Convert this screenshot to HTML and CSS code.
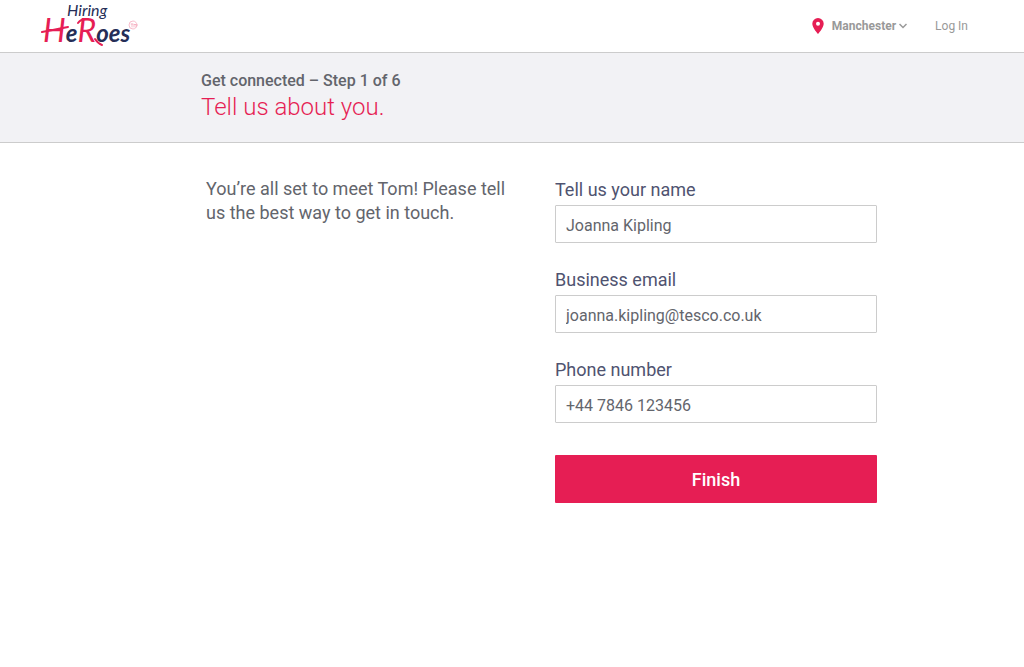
FILE: index.html
```html
<!DOCTYPE html>
<html lang="en">
<head>
<meta charset="utf-8">
<meta name="viewport" content="width=device-width, initial-scale=1">
<title>Hiring Heroes – Get connected</title>
<link rel="stylesheet" href="styles.css">
</head>
<body>
<header class="site-header">
  <a class="logo" href="#" aria-label="Hiring Heroes">
    <svg class="logo-mark" width="104" height="52" viewBox="36 0 104 52">
      <text class="logo-hiring" x="67" y="16">Hiring</text>
      <text class="logo-heroes" x="43" y="42"><tspan class="logo-pink">H</tspan>e<tspan class="logo-pink">R</tspan>oes</text>
      <path class="stroke-pink" d="M42 32C48 31 58 29 68 27M78 23C80 20 83 19 87 19M95 39C97 42 99 44 102 45"/>
      <circle class="stroke-seal" cx="133" cy="25" r="4"/>
      <path class="stroke-seal" d="M131 24h2M132 24v3M134 27v-3l1 1 1-1v3"/>
    </svg>
  </a>
  <nav class="site-nav">
    <button class="location" type="button">
      <svg class="pin" width="12" height="16" viewBox="0 0 12 16"><path fill="#e61e54" fill-rule="evenodd" d="M6 0A5.700 5.700 0 0 0 .3 5.700C.3 9.800 6 16 6 16s5.700-6.200 5.700-10.300A5.700 5.700 0 0 0 6 0Zm0 3.700a2 2 0 1 1 0 4 2 2 0 0 1 0-4Z"/></svg>
      <span>Manchester</span>
      <svg class="chevron" width="8" height="6" viewBox="0 0 8 6"><path fill="none" stroke="#999" stroke-width="1.5" d="M.5 1 4 4.500 7.500 1"/></svg>
    </button>
    <a class="login" href="#">Log In</a>
  </nav>
</header>
<section class="banner">
  <p class="step">Get connected – Step 1 of 6</p>
  <h1 class="title">Tell us about you.</h1>
</section>
<main class="content">
  <p class="intro">You’re all set to meet Tom! Please tell us the best way to get in touch.</p>
  <form class="form">
    <div class="field">
      <label for="name">Tell us your name</label>
      <input id="name" type="text" value="Joanna Kipling">
    </div>
    <div class="field">
      <label for="email">Business email</label>
      <input id="email" type="email" value="joanna.kipling@tesco.co.uk">
    </div>
    <div class="field">
      <label for="phone">Phone number</label>
      <input id="phone" type="tel" value="+44 7846 123456">
    </div>
    <button class="finish" type="submit">Finish</button>
  </form>
</main>
</body>
</html>
```
FILE: styles.css
```css
* {
  box-sizing: border-box;
}

body {
  margin: 0;
  background: #fff;
  color: #63656c;
  font-family: Roboto, "Liberation Sans", sans-serif;
}

button,
input {
  font-family: inherit;
}

.site-header {
  display: flex;
  justify-content: space-between;
  align-items: center;
  padding: 0 56px 0 36px;
}

.logo,
.logo-mark,
.pin,
.chevron {
  display: block;
}

.logo-hiring,
.logo-heroes {
  fill: #252e57;
  font-family: Lato, sans-serif;
  font-style: italic;
}

.logo-hiring {
  font-size: 16px;
}

.logo-heroes {
  font-size: 24px;
  font-weight: 700;
}

.logo-pink {
  fill: #e61e54;
  font-size: 32px;
  font-weight: 400;
}

.stroke-pink,
.stroke-seal {
  fill: none;
  stroke: #e61e54;
  stroke-width: 2;
  stroke-linecap: round;
  stroke-linejoin: round;
}

.stroke-seal {
  stroke: #f4a0b6;
  stroke-width: 0.7;
}

.site-nav {
  display: flex;
  align-items: center;
  gap: 28px;
  font-size: 12px;
}

.location {
  display: flex;
  align-items: center;
  gap: 3px;
  padding: 0;
  border: 0;
  background: none;
  color: #999;
  font-size: 12px;
  font-weight: 700;
}

.pin {
  margin-right: 5px;
}

.login {
  color: #999;
  text-decoration: none;
}

.banner {
  padding: 16px 147px 20px 201px;
  border-top: 1px solid #ccc;
  border-bottom: 1px solid #ccc;
  background: #f2f2f5;
}

.step {
  margin: 0;
  font-size: 16px;
  font-weight: 500;
  line-height: 24px;
}

.title {
  margin: 0;
  color: #e61e54;
  font-size: 24px;
  font-weight: 300;
  line-height: 29px;
}

.content {
  display: grid;
  grid-template-columns: 1fr 1fr;
  gap: 27px;
  padding: 34px 147px 32px 206px;
}

.intro {
  margin: 0;
  font-size: 18px;
  line-height: 24px;
}

.form {
  display: grid;
  gap: 24px;
}

.field {
  display: grid;
  gap: 3px;
}

.field label {
  color: #4f5370;
  font-size: 18px;
  line-height: 25px;
}

.field input {
  width: 100%;
  height: 38px;
  padding: 3px 10px 0;
  border: 1px solid #ccc;
  border-radius: 1px;
  background: #fff;
  color: #63656c;
  font-size: 16px;
}

.finish {
  height: 48px;
  margin-top: 8px;
  border: 0;
  border-radius: 1px;
  background: #e61e54;
  color: #fff;
  font-size: 18px;
  font-weight: 500;
}

@media (max-width: 760px) {
  .banner,
  .content {
    padding-left: 24px;
    padding-right: 24px;
  }

  .content {
    grid-template-columns: 1fr;
  }
}
```
